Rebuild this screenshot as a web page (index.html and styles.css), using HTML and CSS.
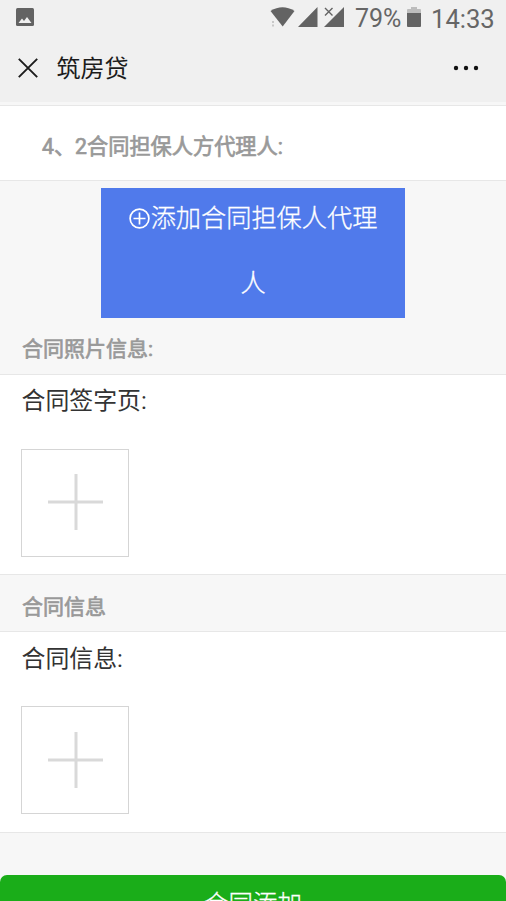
FILE: index.html
```html
<!DOCTYPE html>
<html lang="zh-CN">
<head>
<meta charset="utf-8">
<title>筑房贷</title>
<link rel="stylesheet" href="styles.css">
</head>
<body>
<div class="screen">
  <header class="header">
    <div class="status">
      <svg class="picture" width="18" height="18" viewBox="0 0 18 18"><rect width="18" height="18" rx="1.5" fill="#636363"/><path d="M2.500 15l3.500-4.500 2 2.500 3-4 4.500 6z" fill="#f0f0f0"/></svg>
      <svg class="signals" width="76" height="27" viewBox="0 0 76 27">
        <path d="M.5 11Q12.500 3.500 24.500 11L12.700 26.500z" fill="#636363"/>
        <path d="M2 21h2v2H2zM2 24.500h2v2H2z" fill="#c8c8c8"/>
        <path d="M47.500 7v20H28zM74 7v20H54z" fill="#636363"/>
        <path d="M55 8l7.500 7.500M62.500 8L55 15.500" stroke="#f0f0f0" stroke-width="4"/>
        <path d="M55 8l7.500 7.500M62.500 8L55 15.500" stroke="#636363" stroke-width="1.400"/>
      </svg>
      <span class="percent">79%</span>
      <svg class="battery" width="14" height="21" viewBox="0 0 14 21"><path d="M4 0h6v2h3q1 0 1 1v3H0V3q0-1 1-1h3z" fill="#bdbdbd"/><path d="M0 6h14v13q0 1-1 1H1q-1 0-1-1z" fill="#636363"/></svg>
      <span class="clock">14:33</span>
    </div>
    <div class="nav">
      <svg class="close" width="20" height="20" viewBox="0 0 20 20"><path d="M.8.8l18.400 18.400M19.200.8L.8 19.200" stroke="#1c1c1c" stroke-width="1.900"/></svg>
      <h1 class="title">筑房贷</h1>
      <svg class="more" width="26" height="6" viewBox="0 0 26 6" fill="#111"><circle cx="3" cy="3" r="2.200"/><circle cx="13" cy="3" r="2.200"/><circle cx="23" cy="3" r="2.200"/></svg>
    </div>
  </header>
  <main>
    <section class="agent">4、2合同担保人方代理人:</section>
    <button class="add"><span class="add-text"><svg class="circle-plus" width="21" height="21" viewBox="0 0 21 21" fill="none" stroke="#fff" stroke-width="1.700"><circle cx="10.500" cy="10.500" r="9.400"/><path d="M10.500 4.500v12M4.500 10.500h12"/></svg>添加合同担保人代理人</span></button>
    <h2 class="heading">合同照片信息:</h2>
    <section class="panel">
      <p class="label">合同签字页:</p>
      <div class="upload"><svg class="plus" width="56" height="58" viewBox="0 0 56 58" stroke="#d9d9d9" stroke-width="3"><path d="M28 1v56M0 29h55"/></svg></div>
    </section>
    <h2 class="heading info">合同信息</h2>
    <section class="panel last">
      <p class="label">合同信息:</p>
      <div class="upload"><svg class="plus" width="56" height="58" viewBox="0 0 56 58" stroke="#d9d9d9" stroke-width="3"><path d="M28 1v56M0 29h55"/></svg></div>
    </section>
    <button class="submit">合同添加</button>
  </main>
</div>
</body>
</html>
```
FILE: styles.css
```css
* { box-sizing: border-box; }
body {
  margin: 0;
  font-family: Roboto, "Noto Sans CJK SC", sans-serif;
  background: #f7f7f7;
}
h1, h2, p { margin: 0; font-weight: 400; }
button { display: block; border: 0; font-family: inherit; color: #fff; }
.screen { height: 901px; overflow: hidden; }
.header { height: 102px; background: #f0f0f0; }
.status {
  display: flex;
  height: 36px;
  padding: 0 11px 0 16px;
  color: #666;
  font-size: 25.6px;
  line-height: 38px;
}
.picture { margin-top: 8px; }
.signals { height: 27px; margin-left: auto; }
.percent { width: 47px; margin-left: 9px; font-size: 25px; }
.battery { margin: 7px 10px 0 5px; }
.clock { width: 64px; white-space: nowrap; }
.nav {
  display: flex;
  align-items: center;
  height: 64px;
  padding: 0 27px 0 18px;
}
.title { margin-left: 18.5px; padding-top: 2px; color: #1c1c1c; font-size: 24px; line-height: 36px; }
.more { margin-left: auto; }
.agent {
  height: 76px;
  margin-top: 3px;
  padding-left: 42px;
  border-top: 1px solid #e7e7e7;
  border-bottom: 1px solid #e7e7e7;
  background: #fff;
  color: #999;
  font-size: 21.2px;
  -webkit-text-stroke: 0.7px #999;
  line-height: 82px;
}
.add {
  width: 304px;
  height: 130px;
  margin: 7px auto 0 101px;
  padding: 0 24px;
  background: #507aeb;
  font-size: 25.2px;
  font-weight: 300;
  -webkit-text-stroke: 0.3px #fff;
  line-height: 65px;
  text-align: center;
}
.add-text { display: block; margin: -2px 0 2px; }
.circle-plus { margin-right: 1px; vertical-align: -2px; }
.heading {
  height: 56px;
  padding-left: 22px;
  color: #999;
  font-size: 21px;
  -webkit-text-stroke: 0.7px #999;
  line-height: 63px;
}
.info { line-height: 64px; }
.panel {
  height: 201px;
  padding-left: 21px;
  border-top: 1px solid #e7e7e7;
  border-bottom: 1px solid #e7e7e7;
  background: #fff;
}
.last { height: 202px; }
.label { height: 74px; padding-left: 0.5px; color: #333; font-size: 23.9px; line-height: 52px; }
.last .label { line-height: 54px; }
.upload {
  display: flex;
  align-items: center;
  justify-content: center;
  width: 108px;
  height: 108px;
  border: 1px solid #d5d5d5;
}
.plus { margin: -2px 0 0 2px; }
.last .plus { margin-top: 0; }
.submit {
  width: 506px;
  height: 64px;
  margin-top: 42px;
  border-radius: 7px;
  background: #1aad19;
  font-size: 24.5px;
  font-weight: 300;
  -webkit-text-stroke: 0.3px #fff;
  line-height: 60px;
  padding: 0 0 4px;
}
```
